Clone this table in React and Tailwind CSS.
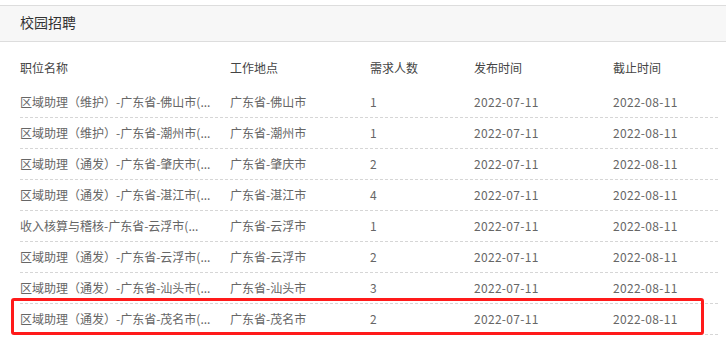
// Campus recruitment list - job table with highlighted row
const jobs = [
    { title: '区域助理（维护）-广东省-佛山市(...', place: '广东省-佛山市', count: 1, start: '2022-07-11', end: '2022-08-11' },
    { title: '区域助理（维护）-广东省-潮州市(...', place: '广东省-潮州市', count: 1, start: '2022-07-11', end: '2022-08-11' },
    { title: '区域助理（通发）-广东省-肇庆市(...', place: '广东省-肇庆市', count: 2, start: '2022-07-11', end: '2022-08-11' },
    { title: '区域助理（通发）-广东省-湛江市(...', place: '广东省-湛江市', count: 4, start: '2022-07-11', end: '2022-08-11' },
    { title: '收入核算与稽核-广东省-云浮市(...', place: '广东省-云浮市', count: 1, start: '2022-07-11', end: '2022-08-11' },
    { title: '区域助理（通发）-广东省-云浮市(...', place: '广东省-云浮市', count: 2, start: '2022-07-11', end: '2022-08-11' },
    { title: '区域助理（通发）-广东省-汕头市(...', place: '广东省-汕头市', count: 3, start: '2022-07-11', end: '2022-08-11' },
    { title: '区域助理（通发）-广东省-茂名市(...', place: '广东省-茂名市', count: 2, start: '2022-07-11', end: '2022-08-11' },
];

const cols = 'grid grid-cols-[210px_140px_104px_139px_1fr]';

const App = () => {
    return (
        <div
            className="w-[726px] h-[343px] bg-white overflow-hidden pt-[5px]"
            style={{ fontFamily: '"Noto Sans CJK SC", "Noto Sans", sans-serif' }}
        >
            {/* Header band */}
            <div className="h-[37px] bg-[#f7f7f7] border-y border-[#dddddd] flex items-center pl-5 pb-[3px]">
                <h2 className="text-[14px] text-[#333] leading-none">校园招聘</h2>
            </div>

            <div className="pl-5 pr-2">
                {/* Column headers */}
                <div className={`${cols} h-[45px] items-end pb-[13px] text-[12px] text-[#444] leading-none`}>
                    <span>职位名称</span>
                    <span>工作地点</span>
                    <span>需求人数</span>
                    <span>发布时间</span>
                    <span>截止时间</span>
                </div>

                {/* Rows */}
                {jobs.map((job, index) => {
                    const last = index === jobs.length - 1;
                    return (
                        <div key={index} className="relative">
                            <div
                                className={`${cols} h-[31px] items-center border-b border-dashed border-[#d6d6d6] text-[12px] text-[#666] leading-none`}
                            >
                                <span className="whitespace-nowrap">{job.title}</span>
                                <span>{job.place}</span>
                                <span>{job.count}</span>
                                <span className="tracking-[0.3px]">{job.start}</span>
                                <span className="tracking-[0.3px]">{job.end}</span>
                            </div>
                            {/* Highlight box */}
                            {last && (
                                <div className="absolute left-[-9px] top-[-6px] w-[693px] h-[37px] border-[3px] border-[#ff1a1a] rounded-[3px] pointer-events-none" />
                            )}
                        </div>
                    );
                })}
            </div>
        </div>
    );
};

export default App;
